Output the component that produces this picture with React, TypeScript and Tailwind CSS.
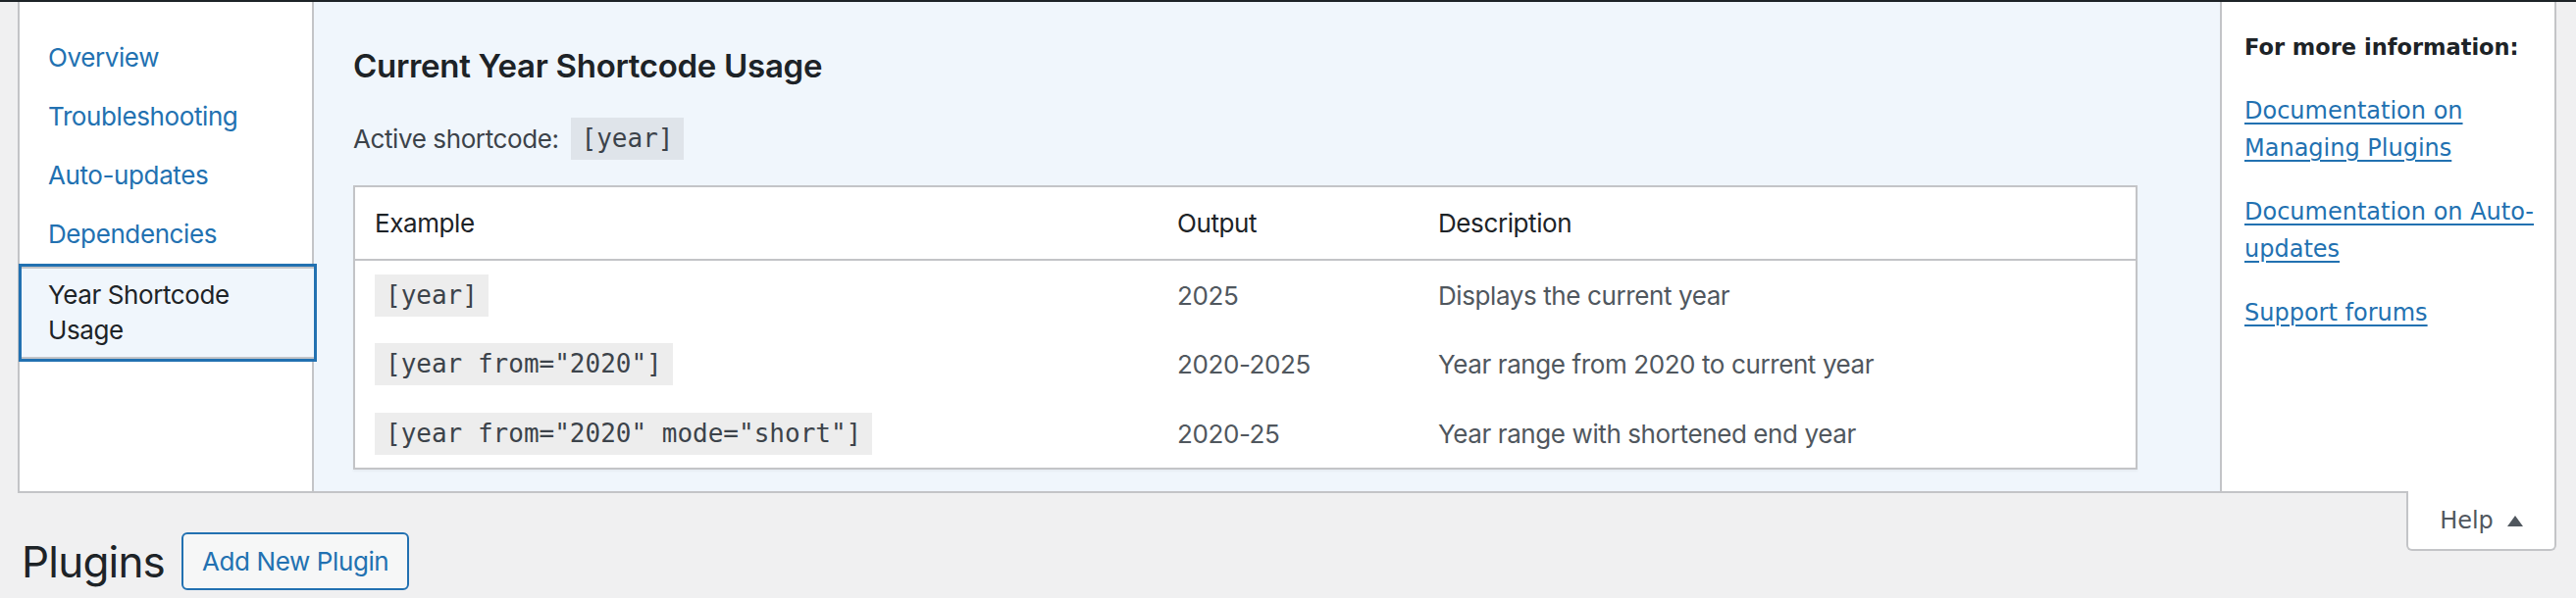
const navItems = ['Overview', 'Troubleshooting', 'Auto-updates', 'Dependencies']

const examples = [
  { code: '[year]', output: '2025', desc: 'Displays the current year' },
  { code: '[year from="2020"]', output: '2020-2025', desc: 'Year range from 2020 to current year' },
  { code: '[year from="2020" mode="short"]', output: '2020-25', desc: 'Year range with shortened end year' },
]

const links = ['Documentation on Managing Plugins', 'Documentation on Auto-updates', 'Support forums']

const sans = "font-['Inter',sans-serif]"
const side = "font-['DejaVu_Sans',sans-serif]"
const mono = "font-['DejaVu_Sans_Mono',monospace]"

const Code = ({ children }: { children: string }) => (
  <code className={`${mono} inline-block bg-[rgba(0,0,0,0.07)] px-[11px] py-[3px] text-[26px] leading-[37px] tracking-normal text-[#3c434a]`}>
    {children}
  </code>
)

export default function App() {
  return (
    <div className={`${sans} min-h-[610px] bg-[#f0f0f1] text-[#3c434a]`}>
      <div className="h-[2px] bg-[#1d2327]" />

      {/* Help panel */}
      <div className="relative ml-[18px] mr-[20px]">
        <div className="flex h-[501px] border-x-2 border-b-2 border-[#c3c4c7] bg-white">
          {/* tabs */}
          <div className="relative z-10 w-[300px] shrink-0 border-r-2 border-[#c3c4c7]">
            <ul className="mt-[27px] text-[26px] leading-[36px] tracking-[-0.4px]">
              {navItems.map((item) => (
                <li key={item} className="py-3 pl-[29px] text-[#2271b1]">
                  {item}
                </li>
              ))}
              <li className="-mr-[5px] -ml-[1px] border-[3px] border-[#2271b1] bg-[#f0f6fc]">
                <div className="border-y-2 border-[#c3c4c7] py-[9px] pl-[27px] text-[#1d2327]">
                  Year Shortcode
                  <br />
                  Usage
                </div>
              </li>
            </ul>
          </div>

          {/* main content */}
          <div className="flex-1 bg-[#f0f6fc] pl-10 pr-[84px]">
            <h2 className="mt-[42px] text-[33px] leading-[46px] font-semibold tracking-[-0.3px] text-[#1d2327]">
              Current Year Shortcode Usage
            </h2>
            <div className="mt-[30px] flex items-center gap-[12px] text-[26px] tracking-[-0.4px]">
              <span>Active shortcode:</span>
              <Code>[year]</Code>
            </div>

            <table className="mt-[26px] w-full table-fixed border-2 border-[#c3c4c7] bg-white text-left text-[26px] tracking-[-0.4px] shadow-[0_2px_2px_rgba(0,0,0,0.04)]">
              <thead>
                <tr className="border-b-2 border-[#c3c4c7] text-[#1d2327]">
                  <th className="h-[75px] w-[819px] px-5 font-normal">Example</th>
                  <th className="w-[266px] px-5 font-normal">Output</th>
                  <th className="px-5 font-normal">Description</th>
                </tr>
              </thead>
              <tbody className="text-[#50575e]">
                {examples.map((ex) => (
                  <tr key={ex.code}>
                    <td className="h-[71px] px-5">
                      <Code>{ex.code}</Code>
                    </td>
                    <td className="px-5">{ex.output}</td>
                    <td className="px-5">{ex.desc}</td>
                  </tr>
                ))}
              </tbody>
            </table>
          </div>

          {/* sidebar */}
          <div className={`${side} w-[341px] shrink-0 border-l-2 border-[#c3c4c7] pl-[23px] pr-[8px] text-[24px] leading-[38.5px]`}>
            <p className="mt-[27px] text-[22.5px] font-bold text-[#1d2327]">For more information:</p>
            {links.map((l) => (
              <p key={l} className="mt-[26px]">
                <a href="#" className="text-[#2271b1] underline decoration-2 underline-offset-[4px]">
                  {l}
                </a>
              </p>
            ))}
          </div>
        </div>

        {/* Help toggle */}
        <div className={`${side} absolute right-0 top-[499px] flex h-[61px] w-[153px] items-center justify-center gap-[14px] rounded-b-[6px] border-x-2 border-b-2 border-[#c3c4c7] bg-white text-[24px] text-[#50575e]`}>
          <span>Help</span>
          <svg width="16" height="11" viewBox="0 0 16 11" className="mt-[1px]">
            <path d="M8 0L16 11H0Z" fill="#50575e" />
          </svg>
        </div>
      </div>

      {/* page title */}
      <div className="ml-[22px] mt-[40px] flex items-center gap-[17px]">
        <h1 className="text-[44px] leading-[58px] font-normal tracking-[-0.8px] text-[#1d2327]">Plugins</h1>
        <button className="h-[59px] rounded-[6px] border-2 border-[#2271b1] bg-[#f6f7f7] px-[19px] text-[26px] tracking-[-0.4px] text-[#2271b1]">
          Add New Plugin
        </button>
      </div>
    </div>
  )
}
